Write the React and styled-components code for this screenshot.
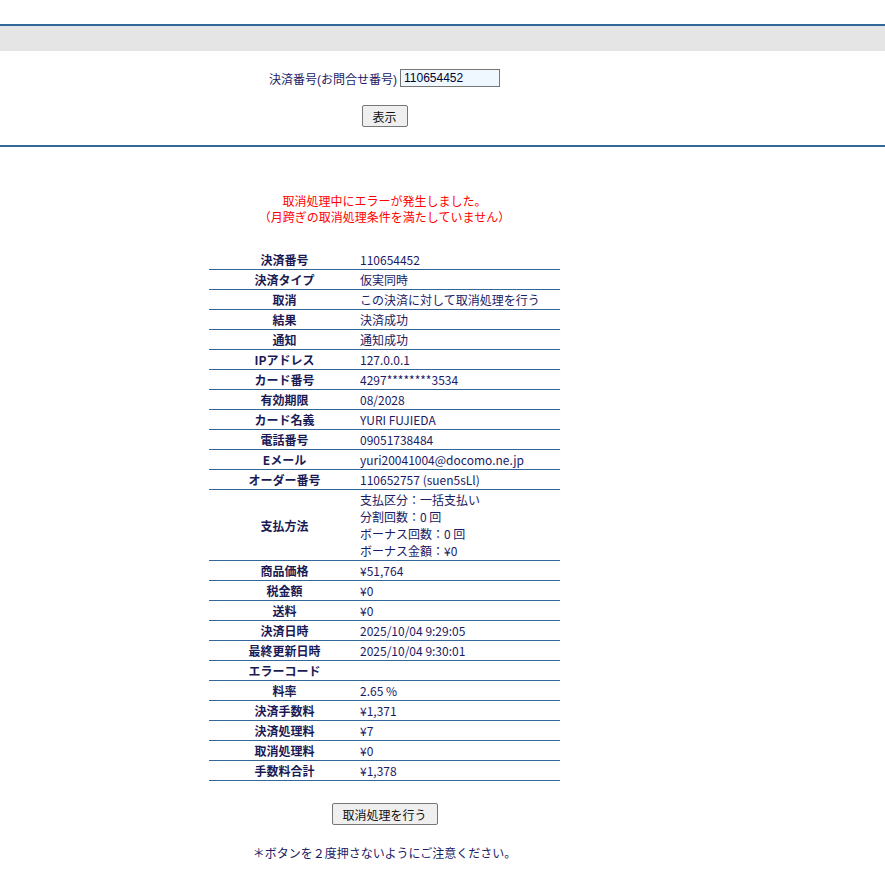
import React from "react";
import styled, { createGlobalStyle } from "styled-components";

const GlobalStyle = createGlobalStyle`
  body {
    margin: 0;
    background: #ffffff;
    font-family: "Noto Sans CJK JP", "Noto Sans", sans-serif;
    color: #1a1a66;
  }
`;

const rows = [
  ["決済番号", "110654452"],
  ["決済タイプ", "仮実同時"],
  ["取消", "この決済に対して取消処理を行う"],
  ["結果", "決済成功"],
  ["通知", "通知成功"],
  ["IPアドレス", "127.0.0.1"],
  ["カード番号", "4297********3534"],
  ["有効期限", "08/2028"],
  ["カード名義", "YURI FUJIEDA"],
  ["電話番号", "09051738484"],
  ["Eメール", "yuri20041004@docomo.ne.jp"],
  ["オーダー番号", "110652757 (suen5sLl)"],
  [
    "支払方法",
    ["支払区分：一括支払い", "分割回数：0 回", "ボーナス回数：0 回", "ボーナス金額：¥0"],
  ],
  ["商品価格", "¥51,764"],
  ["税金額", "¥0"],
  ["送料", "¥0"],
  ["決済日時", "2025/10/04 9:29:05"],
  ["最終更新日時", "2025/10/04 9:30:01"],
  ["エラーコード", ""],
  ["料率", "2.65 %"],
  ["決済手数料", "¥1,371"],
  ["決済処理料", "¥7"],
  ["取消処理料", "¥0"],
  ["手数料合計", "¥1,378"],
];

export default function App() {
  return (
    <>
      <GlobalStyle />
      <Header>
        <Band />
        <SearchForm onSubmit={(e) => e.preventDefault()}>
          <Field>
            <Label htmlFor="order">決済番号(お問合せ番号)</Label>
            <Input id="order" defaultValue="110654452" />
          </Field>
          <Button type="submit" width="46px">表示</Button>
        </SearchForm>
      </Header>
      <Content>
        <ErrorText>
          取消処理中にエラーが発生しました。
          <br />
          （月跨ぎの取消処理条件を満たしていません）
        </ErrorText>
        <Table>
          <tbody>
            {rows.map(([label, value]) => (
              <tr key={label}>
                <Th>{label}</Th>
                <Td>
                  {Array.isArray(value)
                    ? value.map((line) => <div key={line}>{line}</div>)
                    : value}
                </Td>
              </tr>
            ))}
          </tbody>
        </Table>
        <Button type="button" width="106px">取消処理を行う</Button>
        <Note>＊ボタンを２度押さないようにご注意ください。</Note>
      </Content>
    </>
  );
}

const Header = styled.header`
  margin-top: 24px;
  border-top: 2px solid #336699;
  border-bottom: 2px solid #336699;
`;

const Band = styled.div`
  height: 25px;
  background: #e5e5e5;
`;

const SearchForm = styled.form`
  width: 769px;
  box-sizing: border-box;
  padding: 18px 0;
  display: flex;
  flex-direction: column;
  align-items: center;
  gap: 18px;
`;

const Field = styled.div`
  display: flex;
  align-items: center;
  gap: 3px;
  height: 18px;
`;

const Label = styled.label`
  font-family: "Liberation Sans", "Noto Sans CJK JP", sans-serif;
  font-size: 12px;
  color: #1a1a66;
  letter-spacing: 0;
`;

const Input = styled.input`
  width: 100px;
  height: 18px;
  box-sizing: border-box;
  border: 1px solid #767676;
  background: #f0f8ff;
  padding: 0 3px;
  font-family: "Liberation Sans", sans-serif;
  font-size: 12px;
  color: #000033;
  outline: none;
`;

const Button = styled.button`
  width: ${(props) => props.width};
  height: 22px;
  box-sizing: border-box;
  border: 1px solid #767676;
  border-radius: 2px;
  background: #efefef;
  padding: 0;
  font-family: "Noto Sans CJK JP", sans-serif;
  font-size: 12px;
  color: #111111;
  cursor: pointer;
`;

const Content = styled.main`
  width: 769px;
  display: flex;
  flex-direction: column;
  align-items: center;
  padding-top: 46px;
`;

const ErrorText = styled.p`
  margin: 0 0 25px;
  text-align: center;
  color: #ff0000;
  font-size: 12px;
  line-height: 16px;
`;

const Table = styled.table`
  width: 351px;
  border-collapse: collapse;
  font-size: 12px;
  line-height: 17px;
  margin-bottom: 22px;

  tr {
    border-bottom: 1px solid #336699;
  }
`;

const Th = styled.th`
  width: 147px;
  padding: 1px 2px;
  text-align: center;
  vertical-align: middle;
  font-weight: 700;
  color: #1a1a55;
`;

const Td = styled.td`
  padding: 1px 2px 1px 0;
  text-align: left;
  color: #1a1a66;
`;

const Note = styled.p`
  margin: 20px 0 0;
  font-size: 12px;
  line-height: 16px;
  color: #1a1a66;
`;
